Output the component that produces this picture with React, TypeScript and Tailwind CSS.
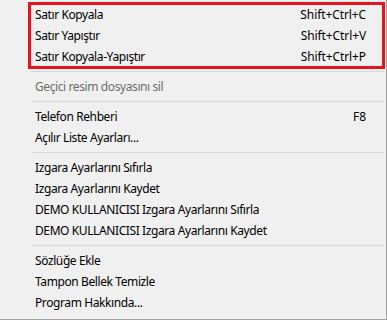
import React from "react"

type Item = { label: string; shortcut?: string; disabled?: boolean }

// Menu sections, split by separators
const sections: Item[][] = [
  [
    { label: "Satır Kopyala", shortcut: "Shift+Ctrl+C" },
    { label: "Satır Yapıştır", shortcut: "Shift+Ctrl+V" },
    { label: "Satır Kopyala-Yapıştır", shortcut: "Shift+Ctrl+P" },
  ],
  [{ label: "Geçici resim dosyasını sil", disabled: true }],
  [
    { label: "Telefon Rehberi", shortcut: "F8" },
    { label: "Açılır Liste Ayarları..." },
  ],
  [
    { label: "Izgara Ayarlarını Sıfırla" },
    { label: "Izgara Ayarlarını Kaydet" },
    { label: "DEMO KULLANICISI Izgara Ayarlarını Sıfırla" },
    { label: "DEMO KULLANICISI Izgara Ayarlarını Kaydet" },
  ],
  [
    { label: "Sözlüğe Ekle" },
    { label: "Tampon Bellek Temizle" },
    { label: "Program Hakkında..." },
  ],
]

function Row({ item }: { item: Item }) {
  return (
    <div
      className={`h-[21px] flex items-center justify-between pl-[35px] pr-[20px] ${
        item.disabled ? "text-[#6d6d6d]" : "text-black"
      }`}
    >
      <span className="tracking-[-0.4px]">{item.label}</span>
      {item.shortcut && <span className="tracking-[-0.1px]">{item.shortcut}</span>}
    </div>
  )
}

export default function App() {
  return (
    <div
      className="relative w-[387px] h-[320px] bg-[#f0f0f0] border-r border-b border-[#a0a0a0] pt-[4px] text-[12px] leading-none overflow-hidden"
      style={{ fontFamily: '"Noto Sans", "Open Sans", sans-serif' }}
    >
      {sections.map((sec, i) => (
        <div key={i}>
          {i > 0 && (
            <div className="py-[4px] pl-[31px] pr-[2px]">
              <div className="h-px bg-[#d7d7d7]" />
            </div>
          )}
          {sec.map((item) => (
            <Row key={item.label} item={item} />
          ))}
        </div>
      ))}

      {/* red highlight box drawn over the first three items */}
      <div className="absolute left-[28px] top-[2px] w-[357px] h-[67px] border-[3px] border-[#e8141c] pointer-events-none" />
    </div>
  )
}
